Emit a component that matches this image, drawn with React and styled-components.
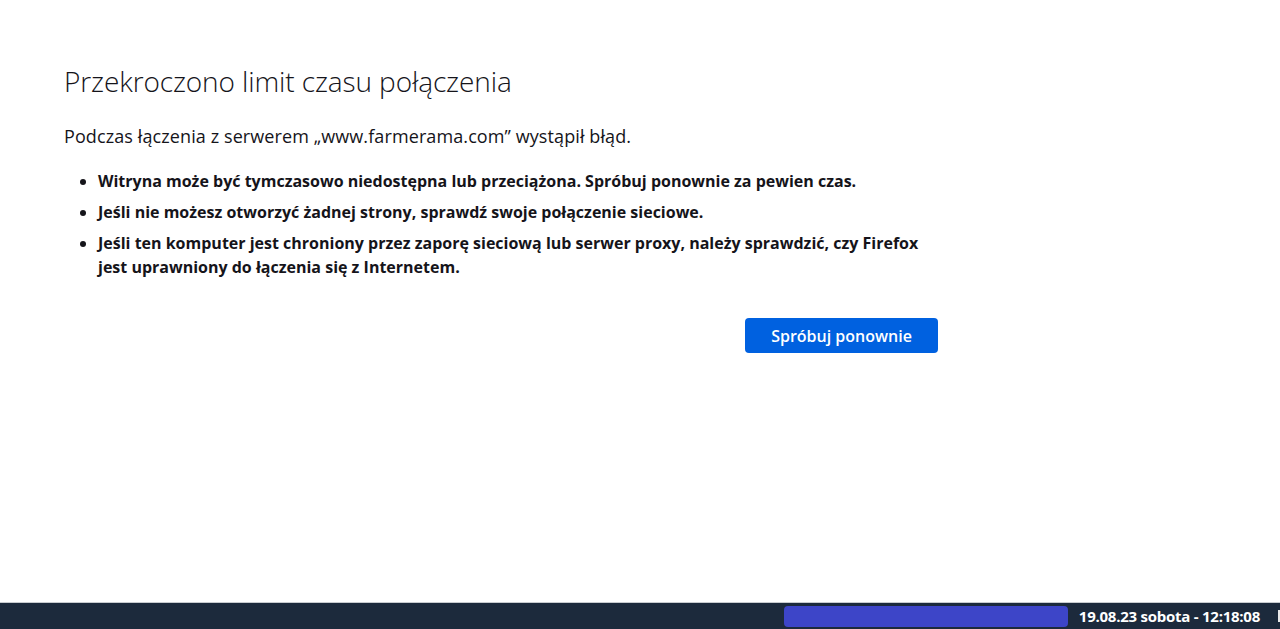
import styled, { createGlobalStyle } from "styled-components";

const Global = createGlobalStyle`
  html, body {
    margin: 0;
    padding: 0;
    height: 100%;
    background: #ffffff;
  }
  #root {
    height: 100%;
  }
`;

export default function App() {
  return (
    <Page>
      <Global />
      <Main>
        <Content>
          <Title>Przekroczono limit czasu połączenia</Title>
          <Intro>Podczas łączenia z serwerem „www.farmerama.com” wystąpił błąd.</Intro>
          <List>
            <Item>Witryna może być tymczasowo niedostępna lub przeciążona. Spróbuj ponownie za pewien czas.</Item>
            <Item>Jeśli nie możesz otworzyć żadnej strony, sprawdź swoje połączenie sieciowe.</Item>
            <Item>
              Jeśli ten komputer jest chroniony przez zaporę sieciową lub serwer proxy, należy sprawdzić, czy Firefox
              jest uprawniony do łączenia się z Internetem.
            </Item>
          </List>
          <Actions>
            <RetryButton>Spróbuj ponownie</RetryButton>
          </Actions>
        </Content>
      </Main>
      <Taskbar>
        <Blur />
        <Clock>19.08.23 sobota - 12:18:08</Clock>
        <Edge />
      </Taskbar>
    </Page>
  );
}

const Page = styled.div`
  height: 629px;
  display: flex;
  flex-direction: column;
  font-family: "Open Sans", "Noto Sans", sans-serif;
  color: #15141a;
`;

const Main = styled.div`
  flex: 1;
  padding: 0 0 0 64px;
`;

const Content = styled.div`
  width: 874px;
  padding-top: 61px;
`;

const Title = styled.h1`
  margin: 0;
  font-size: 28px;
  font-weight: 300;
  line-height: 40px;
  letter-spacing: -0.1px;
`;

const Intro = styled.p`
  margin: 22px 0 0;
  font-size: 18px;
  line-height: 26px;
  letter-spacing: 0.1px;
`;

const List = styled.ul`
  margin: 20px 0 0;
  padding-left: 34px;
`;

const Item = styled.li`
  font-size: 16px;
  font-weight: 700;
  line-height: 24px;
  margin-bottom: 7px;
`;

const Actions = styled.div`
  display: flex;
  justify-content: flex-end;
  margin-top: 39px;
`;

const RetryButton = styled.button`
  width: 193px;
  height: 35px;
  border: none;
  border-radius: 4px;
  background: #0061e0;
  color: #ffffff;
  font-family: "Open Sans", "Noto Sans", sans-serif;
  font-size: 16px;
  font-weight: 600;
`;

const Taskbar = styled.div`
  height: 26px;
  background: #1c2a3c;
  border-top: 1px solid #c8ccd0;
  display: flex;
  align-items: center;
  justify-content: flex-end;
`;

const Blur = styled.div`
  width: 284px;
  height: 21px;
  border-radius: 4px;
  background: #3d45c8;
  margin-right: 11px;
`;

const Clock = styled.span`
  color: #ffffff;
  font-size: 15px;
  font-weight: 700;
  letter-spacing: -0.25px;
  margin-right: 18px;
`;

const Edge = styled.div`
  width: 2px;
  height: 12px;
  background: #e8e8e8;
`;
